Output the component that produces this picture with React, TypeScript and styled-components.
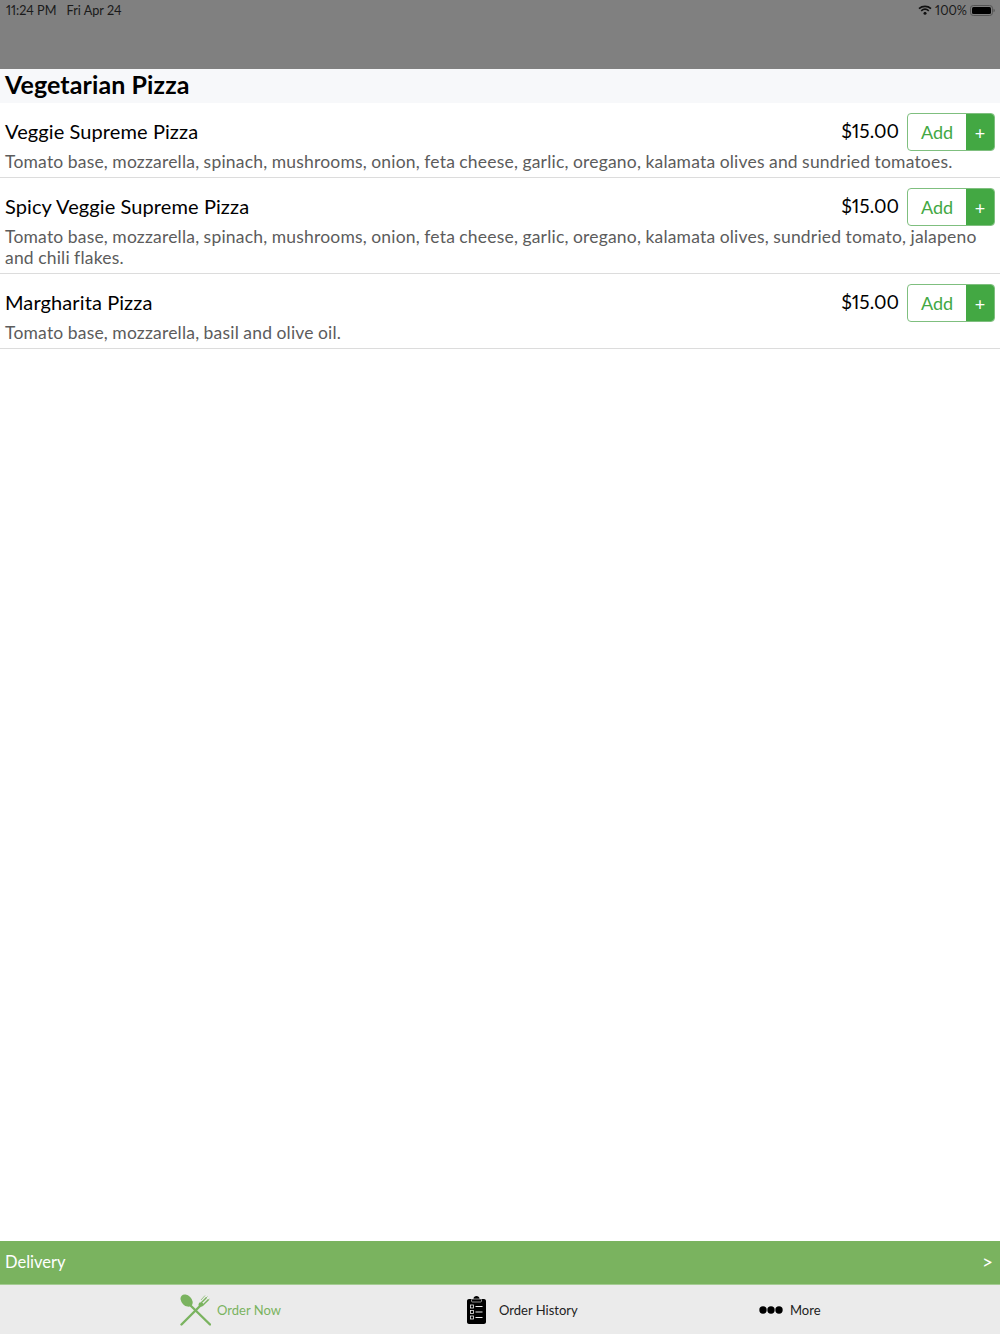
import React from "react";
import styled, { createGlobalStyle } from "styled-components";

const Global = createGlobalStyle`
  html, body { margin: 0; padding: 0; background: #fff; }
  body { font-family: "Lato", "Liberation Sans", sans-serif; font-variant-numeric: proportional-nums; }
  * { box-sizing: border-box; }
`;

const Page = styled.div`
  width: 1000px;
  height: 1334px;
  display: flex;
  flex-direction: column;
  overflow: hidden;
`;

const StatusBar = styled.header`
  height: 69px;
  flex: none;
  background: #808080;
  color: #1a1a1a;
  display: flex;
  justify-content: space-between;
  align-items: flex-start;
  padding: 3px 5px 0 6px;
  font-size: 12.7px;
  line-height: 14px;
`;

const StatusGroup = styled.div<{ $gap: number }>`
  display: flex;
  align-items: center;
  gap: ${(p) => p.$gap}px;
`;

const SectionTitle = styled.h1`
  margin: 0;
  height: 34px;
  flex: none;
  background: #f7f8fa;
  color: #000;
  padding: 0 5px;
  font-size: 25px;
  font-weight: 700;
  line-height: 31px;
  letter-spacing: 0.1px;
`;

const List = styled.main`
  flex: 1;
`;

const Item = styled.article`
  padding: 10px 5px 5px;
  border-bottom: 1px solid #dcdcdc;
`;

const ItemHead = styled.div`
  display: flex;
  align-items: center;
  height: 38px;
`;

const ItemName = styled.h2`
  margin: 0 0 3px;
  flex: 1;
  font-size: 20px;
  font-weight: 400;
  letter-spacing: 0.1px;
  color: #000;
`;

const Price = styled.span`
  font-size: 19px;
  color: #000;
  margin: 0 8px 3px 0;
`;

const AddButton = styled.div`
  width: 88px;
  height: 38px;
  display: flex;
  border: 1px solid #7fbf7f;
  border-radius: 4px;
  overflow: hidden;
`;

const AddLabel = styled.span`
  flex: 1;
  display: flex;
  align-items: center;
  justify-content: center;
  font-size: 18px;
  color: #43a843;
`;

const Plus = styled.span`
  width: 28px;
  display: flex;
  align-items: center;
  justify-content: center;
  background: #43a843;
  color: #fff;
  font-size: 18px;
  padding-top: 2px;
`;

const Description = styled.p`
  margin: 0;
  font-size: 17.5px;
  line-height: 21px;
  letter-spacing: 0.2px;
  word-spacing: -0.4px;
  color: #5c5c5c;
`;

const DeliveryBar = styled.div`
  height: 44px;
  flex: none;
  background: #7ab35f;
  border-bottom: 1px solid #a5cc93;
  color: #fff;
  display: flex;
  align-items: center;
  justify-content: space-between;
  padding: 0 7px 2px 5px;
  font-size: 16.5px;
`;

const Chevron = styled.span`
  font-size: 19px;
`;

const TabBar = styled.nav`
  height: 49px;
  flex: none;
  background: #ebebeb;
  position: relative;
  display: grid;
  grid-template-columns: 460px 291px 249px;
`;

const Tab = styled.div<{ $active?: boolean; $pad: number; $gap: number }>`
  display: flex;
  align-items: center;
  gap: ${(p) => p.$gap}px;
  padding-left: ${(p) => p.$pad}px;
  font-size: 13px;
  color: ${(p) => (p.$active ? "#7ab35f" : "#222")};
`;

const items = [
  {
    name: "Veggie Supreme Pizza",
    desc: "Tomato base, mozzarella, spinach, mushrooms, onion, feta cheese, garlic, oregano, kalamata olives and sundried tomatoes.",
  },
  {
    name: "Spicy Veggie Supreme Pizza",
    desc: "Tomato base, mozzarella, spinach, mushrooms, onion, feta cheese, garlic, oregano, kalamata olives, sundried tomato, jalapeno and chili flakes.",
  },
  {
    name: "Margharita Pizza",
    desc: "Tomato base, mozzarella, basil and olive oil.",
  },
];

const Wifi = () => (
  <svg width="14" height="10" viewBox="0 0 14 10" fill="none" stroke="#111">
    <path d="M1 3.6C4.4.6 9.6.6 13 3.6" strokeWidth="1.7" />
    <path d="M3.2 5.8c2.2-1.9 5.4-1.9 7.6 0" strokeWidth="1.7" />
    <circle cx="7" cy="8.2" r="1.5" fill="#111" stroke="none" />
  </svg>
);

const Battery = () => (
  <svg width="25" height="11" viewBox="0 0 25 11">
    <rect x="0.5" y="0.5" width="22" height="10" rx="2.8" fill="none" stroke="#555" />
    <rect x="2" y="2" width="19" height="7" rx="1.5" fill="#000" />
    <path d="M23.5 3.8c.9.2 1.3.9 1.3 1.7s-.4 1.5-1.3 1.7z" fill="#555" />
  </svg>
);

const Cutlery = () => (
  <svg width="31" height="32" viewBox="0 0 31 32" fill="none" stroke="#7ab35f">
    <path d="M30 30.5 9 10" strokeWidth="2.4" strokeLinecap="round" />
    <ellipse cx="6.6" cy="6.6" rx="5" ry="7" transform="rotate(-45 6.6 6.6)" fill="#7ab35f" stroke="none" />
    <path d="M1.5 30.5 22 10" strokeWidth="2.4" strokeLinecap="round" />
    <path d="M20.5 8.5 26 3l1 1-5 5 1 1 5-5 1 1-6 6c-1.500 1-3 1-4 0s-.5-2 .5-3.500z" fill="#7ab35f" stroke="none" />
    <path d="M25 1.500 21 6M27.500 2.500 23 7M29.500 5 25 9" strokeWidth="1" opacity=".7" />
  </svg>
);

const Clipboard = () => (
  <svg width="19" height="28" viewBox="0 0 19 28">
    <path d="M2 3h4.500V2.500C6.500 1 8 0 9.500 0s3 1 3 2.500V3H17c1.100 0 2 .9 2 2v21c0 1.100-.9 2-2 2H2c-1.100 0-2-.9-2-2V5c0-1.100.9-2 2-2z" fill="#000" />
    <rect x="4.500" y="3" width="10" height="3" rx="1" fill="#000" stroke="#ebebeb" strokeWidth=".6" />
    <g fill="none" stroke="#ebebeb">
      <rect x="3.500" y="9" width="3" height="3" strokeWidth=".8" />
      <rect x="3.500" y="14.500" width="3" height="3" strokeWidth=".8" />
      <rect x="3.500" y="20" width="3" height="3" strokeWidth=".8" />
      <path d="M8.500 10.500h7M8.500 16h7M8.500 21.500h7" strokeWidth="1.200" />
    </g>
  </svg>
);

const Dots = () => (
  <svg width="24" height="8" viewBox="0 0 24 8" fill="#000">
    <circle cx="4" cy="4" r="3.700" />
    <circle cx="12" cy="4" r="3.700" />
    <circle cx="20" cy="4" r="3.700" />
  </svg>
);

export default function App() {
  return (
    <Page>
      <Global />
      <StatusBar>
        <StatusGroup $gap={10}>
          <span>11:24 PM</span>
          <span>Fri Apr 24</span>
        </StatusGroup>
        <StatusGroup $gap={3}>
          <Wifi />
          <span>100%</span>
          <Battery />
        </StatusGroup>
      </StatusBar>
      <SectionTitle>Vegetarian Pizza</SectionTitle>
      <List>
        {items.map((item) => (
          <Item key={item.name}>
            <ItemHead>
              <ItemName>{item.name}</ItemName>
              <Price>$15.00</Price>
              <AddButton>
                <AddLabel>Add</AddLabel>
                <Plus>+</Plus>
              </AddButton>
            </ItemHead>
            <Description>{item.desc}</Description>
          </Item>
        ))}
      </List>
      <DeliveryBar>
        <span>Delivery</span>
        <Chevron>&gt;</Chevron>
      </DeliveryBar>
      <TabBar>
        <Tab $active $pad={180} $gap={6}>
          <Cutlery />
          <span>Order Now</span>
        </Tab>
        <Tab $pad={7} $gap={13}>
          <Clipboard />
          <span>Order History</span>
        </Tab>
        <Tab $pad={8} $gap={7}>
          <Dots />
          <span>More</span>
        </Tab>
      </TabBar>
    </Page>
  );
}
